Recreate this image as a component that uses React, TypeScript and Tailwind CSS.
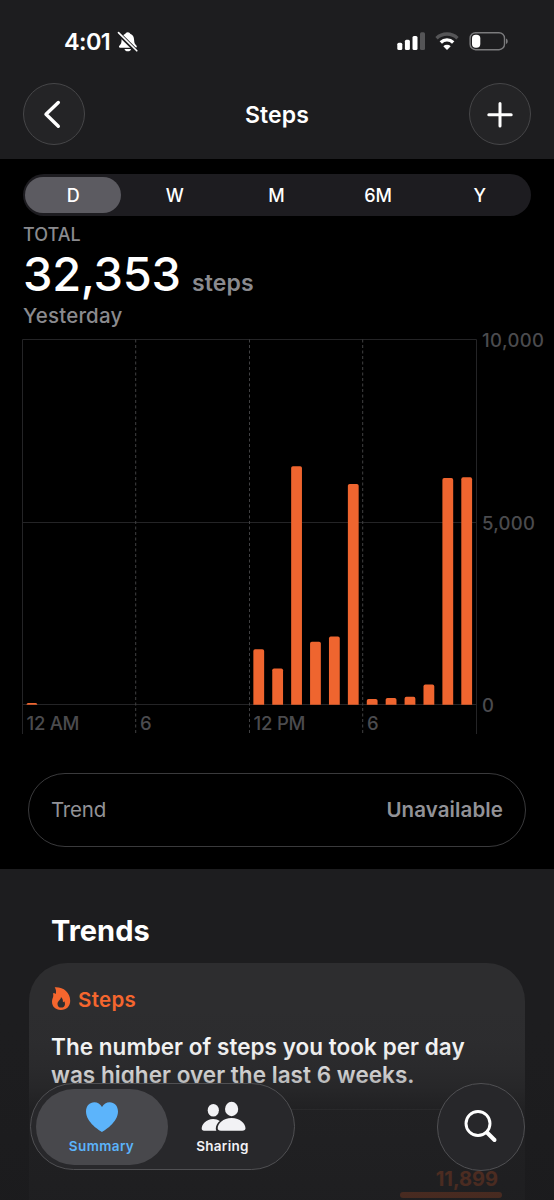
import React, { useState } from 'react';

interface HourBar {
  hour: number;
  steps: number;
}

const ranges = ['D', 'W', 'M', '6M', 'Y'];

const hourly: HourBar[] = [
  { hour: 0, steps: 45 },
  { hour: 12, steps: 1520 },
  { hour: 13, steps: 990 },
  { hour: 14, steps: 6530 },
  { hour: 15, steps: 1725 },
  { hour: 16, steps: 1865 },
  { hour: 17, steps: 6045 },
  { hour: 18, steps: 155 },
  { hour: 19, steps: 185 },
  { hour: 20, steps: 215 },
  { hour: 21, steps: 550 },
  { hour: 22, steps: 6205 },
  { hour: 23, steps: 6225 },
];

const CHART_LEFT = 22.7;
const CHART_RIGHT = 476.4;
const CHART_TOP = 9.5;
const CHART_BASE = 374.7;
const HOUR_WIDTH = (CHART_RIGHT - CHART_LEFT) / 24;

const barPath = (bar: HourBar) => {
  const x = CHART_LEFT + bar.hour * HOUR_WIDTH + 3.8;
  const w = 10.8;
  const y = CHART_BASE - (bar.steps / 10000) * (CHART_BASE - CHART_TOP);
  const r = Math.min(1.8, CHART_BASE - y);
  return `M${x} ${CHART_BASE}V${y + r}Q${x} ${y} ${x + r} ${y}H${x + w - r}Q${x + w} ${y} ${x + w} ${y + r}V${CHART_BASE}Z`;
};

const StatusBar: React.FC = () => (
  <div className="flex h-[83px] items-start justify-between pl-16 pr-[46px] pt-[27px]">
    <div className="flex items-center pt-px">
      <span className="w-[50px] whitespace-nowrap text-[23.5px] font-semibold leading-[28px] tracking-[-0.6px]">4:01</span>
      <svg width="23" height="23" viewBox="0 0 24 24" className="-mt-px ml-[2px]">
        <path
          d="M12.3 2.3c1.5 0 2.2.8 2.5 1.7 2.8.9 4 3.3 4.1 6.4.1 3.1.8 4.4 2.5 6 .7.7.3 2-.9 2H4.300c-1.200 0-1.600-1.200-.8-2 1.800-1.700 2.200-2.900 2.300-6 .1-3.200 1.300-5.500 4-6.400.3-.9 1-1.700 2.500-1.700Z"
          fill="#fff"
        />
        <path d="M8.900 19.700h6.800c-.3 1.600-1.600 2.600-3.400 2.600s-3.100-1-3.400-2.600Z" fill="#fff" />
        <path d="M2.800 3.600 21 21.700" stroke="#1d1d1f" strokeWidth="4.200" />
        <path d="M2.600 2.800 21.700 21.700" stroke="#fff" strokeWidth="1.700" strokeLinecap="round" />
      </svg>
    </div>
    <svg width="111" height="22" viewBox="397 30 111 22" className="mt-[3px]">
      <rect x="397.3" y="42.8" width="5" height="7.2" rx="1.5" fill="#fff" />
      <rect x="404.9" y="39.7" width="5" height="10.3" rx="1.5" fill="#fff" />
      <rect x="412.5" y="36" width="5" height="14" rx="1.5" fill="#fff" />
      <rect x="420" y="32.3" width="5" height="17.7" rx="1.5" fill="#555557" />
      <g fill="none">
        <path d="M436.500 38.2a15.2 15.2 0 0 1 21 0" stroke="#555557" strokeWidth="3.3" />
        <path d="M440.800 42.400a9 9 0 0 1 12.400 0" stroke="#fff" strokeWidth="3.4" />
      </g>
      <path d="M447 50.100 443.300 46.200a5.400 5.400 0 0 1 7.400 0Z" fill="#fff" />
      <rect x="470.1" y="32.7" width="34.4" height="17" rx="5.5" fill="none" stroke="#7b7b7d" strokeWidth="1.4" />
      <rect x="472" y="34.7" width="8.3" height="13" rx="3.7" fill="#fff" />
      <path d="M506 38.500c2.300.9 2.300 4.600 0 5.500Z" fill="#7b7b7d" />
    </svg>
  </div>
);

const StepsChart: React.FC = () => (
  <svg width="554" height="414" viewBox="0 0 554 414" className="block shrink-0 overflow-visible">
    <g stroke="#242426" strokeWidth="1">
      <path d="M22.500 9.500H476.500" />
      <path d="M22.500 192.500H476.500" />
      <path d="M22.500 374.500H476.500" />
      <path d="M22.500 9.500V404" />
      <path d="M476.500 9.500V404" />
    </g>
    <g stroke="#404042" strokeWidth="1" strokeDasharray="3 2.5">
      <path d="M135.700 9.500V405" />
      <path d="M249.500 9.500V405" />
      <path d="M362.700 9.500V405" />
    </g>
    {hourly.map((bar) => (
      <path key={bar.hour} d={barPath(bar)} fill="#ef652f" />
    ))}
    <g fill="#4b4b4e" fontSize="18.5" fontWeight="500">
      <text x="482" y="16.600" textLength="62">10,000</text>
      <text x="482" y="199.600" textLength="53">5,000</text>
      <text x="482" y="381.600" textLength="11.500">0</text>
      <text x="26.500" y="399.700" textLength="53">12 AM</text>
      <text x="140" y="399.700" textLength="11.500">6</text>
      <text x="253.500" y="399.700" textLength="52">12 PM</text>
      <text x="367" y="399.700" textLength="11.500">6</text>
    </g>
  </svg>
);

const TabBar: React.FC = () => (
  <div className="absolute inset-x-0 bottom-[29px] flex items-start justify-between pl-[30px] pr-[29px]">
    <nav className="flex h-[87px] w-[265px] rounded-full border border-[#505053] bg-[#28282b] p-[4.5px]">
      <button className="flex w-[132px] flex-col items-center rounded-full bg-[#48484c] pt-[12px] text-[#5cb4fb]">
        <svg width="34" height="32" viewBox="0 0 34 32" fill="currentColor">
          <path d="M17 31C15.400 30.200 1 21.500 1 10.500 1 5 4.700 1.300 9.300 1.300c3.300 0 6 1.700 7.700 4.700 1.700-3 4.400-4.700 7.700-4.700C29.300 1.300 33 5 33 10.500 33 21.500 18.600 30.200 17 31Z" />
        </svg>
        <span className="mt-[3px] text-[13.5px] font-semibold leading-[20px] tracking-[0.4px]">Summary</span>
      </button>
      <button className="flex w-[110px] flex-col items-center pt-[12px] text-[#f2f2f5]">
        <svg width="46" height="32" viewBox="0 0 46 32" fill="currentColor">
          <ellipse cx="13.300" cy="9.300" rx="5.600" ry="6.300" />
          <path d="M4 29.700c-1.500 0-2.300-.8-2.300-2.100 0-4.500 4.500-9.700 11.500-9.700 2.600 0 4.900.8 6.600 2-2.400 2-4 4.700-4 7.600 0 .8.200 1.600.6 2.200Z" />
          <ellipse cx="31.600" cy="8" rx="6.600" ry="7.200" />
          <path d="M21 29.700c-2.300 0-3.300-.8-3.300-2.400 0-4.500 5.300-10.300 13.900-10.300s13.900 5.800 13.900 10.300c0 1.600-1 2.400-3.300 2.400Z" />
        </svg>
        <span className="mt-[3px] text-[13.5px] font-semibold leading-[20px] tracking-[0.3px]">Sharing</span>
      </button>
    </nav>
    <button className="flex size-[88px] items-center justify-center rounded-full border border-[#505053] bg-[#27272a]">
      <svg width="36" height="36" viewBox="0 0 36 36" fill="none" stroke="#fff" strokeLinecap="round">
        <circle cx="15" cy="14.500" r="12" strokeWidth="2.900" />
        <path d="M24 23.500 31.500 31" strokeWidth="4" />
      </svg>
    </button>
  </div>
);

const App: React.FC = () => {
  const [range, setRange] = useState('D');

  return (
    <div className="relative flex h-[1200px] w-[554px] flex-col overflow-hidden bg-black font-['Inter','Liberation_Sans',sans-serif] text-white">
      <header className="h-[159px] shrink-0 bg-[#1d1d1f]">
        <StatusBar />
        <div className="flex items-center justify-between px-[23px]">
          <button className="flex size-[62px] items-center justify-center rounded-full border border-[#464648] bg-[#242426]">
            <svg width="28" height="32" viewBox="0 0 28 32" fill="none" stroke="#fff" strokeWidth="3.4" strokeLinecap="round" strokeLinejoin="round" className="-ml-[3px]">
              <path d="M19.300 4.500 7 16.300 19.300 28.300" />
            </svg>
          </button>
          <h1 className="pt-[2px] text-[23px] font-semibold leading-[30px] tracking-[0.1px]">Steps</h1>
          <button className="flex size-[62px] items-center justify-center rounded-full border border-[#464648] bg-[#242426]">
            <svg width="28" height="28" viewBox="0 0 28 28" fill="none" stroke="#fff" strokeWidth="3" strokeLinecap="round">
              <path d="M14 3.500V26M2.800 14.700H25.200" />
            </svg>
          </button>
        </div>
      </header>

      <section className="h-[171px] shrink-0 px-[23px] pt-[15px]">
        <div className="flex h-[42px] rounded-full bg-[#1d1c20]">
          {ranges.map((item) => (
            <button
              key={item}
              onClick={() => setRange(item)}
              className="flex flex-1 items-center justify-center text-[18px] font-medium"
            >
              <span
                className={`mr-px flex h-[36px] w-[96px] items-center justify-center rounded-full ${
                  item === range ? 'bg-[#5c5b61]' : ''
                }`}
              >
                {item}
              </span>
            </button>
          ))}
        </div>
        <p className="mt-[8px] text-[18px] font-medium leading-[22px] text-[#8a8a8e]">TOTAL</p>
        <div className="flex h-[58px] items-baseline leading-[56px]">
          <span className="w-[169px] whitespace-nowrap text-[47px] font-medium tracking-[-0.3px]">32,353</span>
          <span className="text-[23px] font-semibold tracking-[0.1px] text-[#8a8a8e]">steps</span>
        </div>
        <p className="-mt-px text-[20.5px] font-medium leading-[26px] tracking-[0.2px] text-[#8a8a8e]">Yesterday</p>
      </section>

      <StepsChart />

      <section className="h-[125px] shrink-0 px-[28px] pt-[29px]">
        <div className="flex h-[74px] items-center justify-between rounded-full border-[1.5px] border-[#3a3a3c] px-[22px] pt-px text-[#929297]">
          <span className="text-[20.5px] tracking-[-0.2px]">Trend</span>
          <span className="text-[20.5px] font-semibold tracking-[0.1px]">Unavailable</span>
        </div>
      </section>

      <section className="relative h-[331px] shrink-0 bg-[#1d1d1f] px-[29px] pt-[44px]">
        <h2 className="pl-[22px] text-[29px] font-bold leading-[36px]">Trends</h2>
        <div className="mt-[14px] h-[300px] rounded-[38px] bg-[#2d2d2f] px-[22px] pt-[23px]">
          <div className="flex h-[28px] items-center text-[#f5662e]">
            <svg width="20" height="25" viewBox="0 0 20 25" fill="currentColor" fillRule="evenodd" className="-mt-[3px]">
              <path d="M3.700 1.200C12 .6 19.200 6 19.200 14.700c0 5.400-3.600 9.300-9.400 9.300C4.400 24 1 20.500 1 15.800c0-2.600 1.100-3.900 1.300-5.700.100-1.100-.3-2.200-.1-3.200 1 .1 1.900.4 2.600 1 .6-2.700.1-4.900-1.100-6.700Zm6.200 9.700c.4 2.900-3.400 3.700-3.400 7 0 2.200 1.500 3.700 3.700 3.700s3.800-1.400 3.800-3.700c0-1.100-.3-1.900-.8-2.700-.4.600-.9.900-1.300 1 .2-2-.4-4.100-2-5.300Z" />
            </svg>
            <span className="ml-[7px] text-[20.5px] font-semibold tracking-[0.3px]">Steps</span>
          </div>
          <p className="mt-[19px] whitespace-nowrap text-[22.5px] font-semibold leading-[28px] tracking-[0.04px]">
            The number of steps you took per day
            <br />
            was higher over the last 6 weeks.
          </p>
          <div className="mt-[20px] border-t border-[#48484a]" />
          <div className="ml-auto mr-px mt-[57px] flex w-[102px] flex-col items-end text-[20px] font-bold leading-[24px] text-[#f5662e]">
            <span className="mr-[4px]">11,899</span>
            <div className="mt-px h-[6px] w-full rounded-full bg-[#f5662e]" />
          </div>
        </div>
        {/* Content fades out underneath the tab bar */}
        <div className="absolute inset-x-0 bottom-0 h-[200px] bg-[linear-gradient(to_bottom,#1c1c1e00_0%,#1c1c1e08_20%,#1c1c1e28_33%,#1c1c1e58_43%,#1c1c1eb8_55%,#1b1b1dcc_100%)]" />
      </section>

      <TabBar />
    </div>
  );
};

export default App;
